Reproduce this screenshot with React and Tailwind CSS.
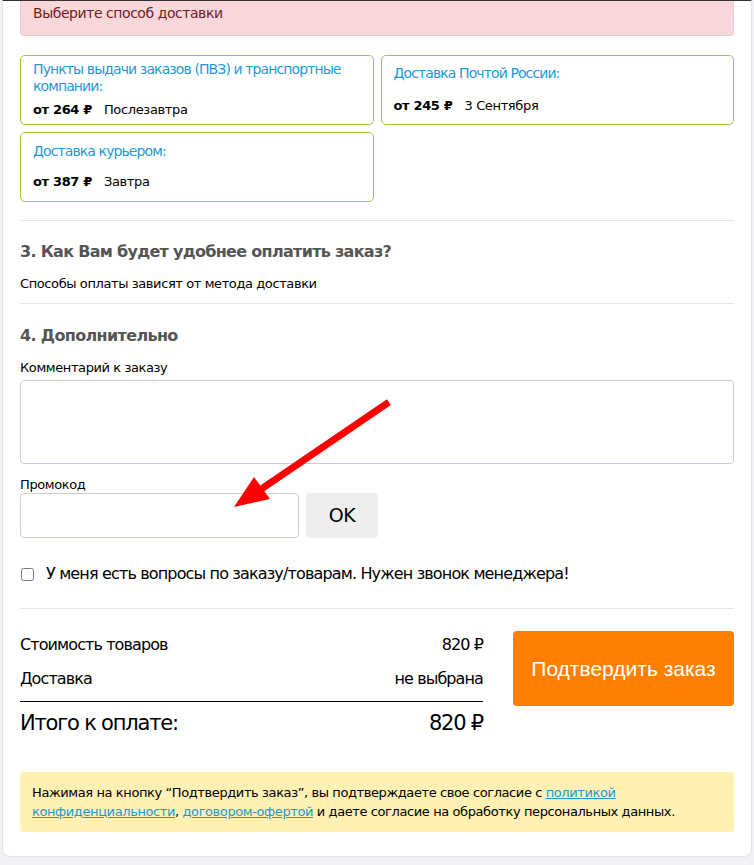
import React from 'react';

// Карточка способа доставки
const DeliveryCard = ({ title, price, date, gap }) => (
  <div className={`border border-[#9acd32] rounded-[5px] px-3 h-[70px] flex flex-col justify-center ${gap}`}>
    <div className="text-[14px] leading-[17px] tracking-[-0.9px] text-[#1b9ad6]">{title}</div>
    <div className="text-[13px] leading-[18px] tracking-[-0.35px] text-black">
      <b className="mr-3">от {price} ₽</b>
      {date}
    </div>
  </div>
);

const Arrow = () => (
  <svg className="absolute left-[224px] top-[395px] pointer-events-none" width="170" height="120" viewBox="0 0 170 120">
    <line x1="159" y1="8" x2="33" y2="94" stroke="#ff0000" strokeWidth="7" strokeLinecap="square" />
    <polygon points="7,111 27,81 43,103" fill="#ff0000" />
  </svg>
);

export default function App() {
  return (
    <div className="min-h-[865px] bg-[#f1f2f6] font-['DejaVu_Sans',sans-serif] text-black">
      <div className="relative mx-[2px] bg-white border-x border-b border-[#e3e3e3] rounded-b-[8px] border-t border-t-[#333] px-[17px] pb-[24px]">
        <div className="bg-[#f8d7da] text-[#721c24] border border-[#f5c6cb] border-t-0 rounded-b-[4px] px-3 pt-[3px] pb-[13px] text-[14px] leading-[18px] tracking-[-0.45px]">
          Выберите способ доставки
        </div>

        <div className="grid grid-cols-2 gap-[7px] mt-[19px]">
          <DeliveryCard title="Пункты выдачи заказов (ПВЗ) и транспортные компании:" price="264" date="Послезавтра" gap="gap-[6px]" />
          <DeliveryCard title="Доставка Почтой России:" price="245" date="3 Сентября" gap="gap-[15px]" />
          <DeliveryCard title="Доставка курьером:" price="387" date="Завтра" gap="gap-[13px]" />
        </div>

        <div className="border-t border-[#e5e5e5] mt-[18px] pt-[20px]">
          <h3 className="text-[16px] font-bold text-[#555] leading-[22px] tracking-[-0.7px]">3. Как Вам будет удобнее оплатить заказ?</h3>
          <p className="text-[13px] leading-[18px] tracking-[-0.4px] mt-[12px]">Способы оплаты зависят от метода доставки</p>
        </div>

        <div className="border-t border-[#e5e5e5] mt-[10px] pt-[21px]">
          <h3 className="text-[16px] font-bold text-[#555] leading-[22px] tracking-[-0.65px]">4. Дополнительно</h3>
          <label className="block text-[13px] leading-[18px] tracking-[-0.4px] mt-[12px]">Комментарий к заказу</label>
          <textarea className="block w-full h-[84px] mt-[3px] border border-[#ccd] rounded-[4px] resize-none" />

          <label className="block text-[13px] leading-[17px] tracking-[-0.4px] mt-[12px]">Промокод</label>
          <div className="flex gap-[7px]">
            <input className="w-[279px] h-[45px] border border-[#ccd] rounded-[4px]" />
            <button className="w-[72px] h-[45px] bg-[#eee] rounded-[4px] text-[19px] tracking-[-0.5px]">OK</button>
          </div>

          <label className="flex items-center gap-[12px] mt-[25px] text-[16px] leading-[22px] tracking-[-0.85px]">
            <input type="checkbox" className="w-[13px] h-[13px] ml-[1px]" />
            У меня есть вопросы по заказу/товарам. Нужен звонок менеджера!
          </label>
        </div>

        <div className="border-t border-[#e5e5e5] mt-[23px] pt-[25px] flex gap-[30px]">
          <div className="w-[463px] tracking-[-0.9px]">
            <div className="flex justify-between text-[16px] leading-[22px]">
              <span>Стоимость товаров</span><span>820 ₽</span>
            </div>
            <div className="flex justify-between text-[16px] leading-[22px] mt-[12px]">
              <span>Доставка</span><span>не выбрана</span>
            </div>
            <div className="border-t border-black mt-[11px] pt-[7px] flex justify-between text-[21px] leading-[28px] tracking-[-1.2px]">
              <span>Итого к оплате:</span><span>820 ₽</span>
            </div>
          </div>
          <button className="flex-1 h-[75px] -mt-[3px] bg-[#ff8000] rounded-[4px] text-white text-[21px] font-['Liberation_Sans',sans-serif]">
            Подтвердить заказ
          </button>
        </div>

        <div className="mt-[35px] bg-[#fff0b3] rounded-[4px] px-3 py-[11px] text-[13px] leading-[19px] tracking-[-0.4px]">
          Нажимая на кнопку “Подтвердить заказ”, вы подтверждаете свое согласие с <a href="#" className="text-[#1b9ad6] underline">политикой конфиденциальности</a>, <a href="#" className="text-[#1b9ad6] underline">договором-офертой</a> и даете согласие на обработку персональных данных.
        </div>

        <Arrow />
      </div>
    </div>
  );
}
